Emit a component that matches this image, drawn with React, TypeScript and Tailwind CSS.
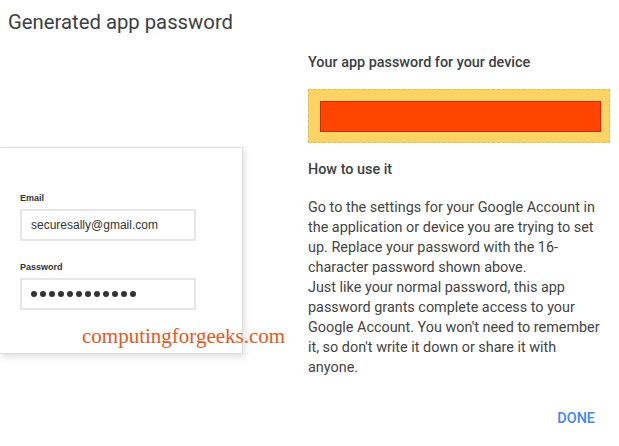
import React from "react";

export default function App() {
  return (
    <div
      className="w-[619px] h-[446px] bg-white overflow-hidden flex flex-col"
      style={{ fontFamily: "Roboto, 'Liberation Sans', sans-serif" }}
    >
      <div className="pl-[8px] pt-[8px] h-[35px] text-[20.3px] leading-[28px] text-[#3c4043]">
        Generated app password
      </div>
      <div className="flex flex-1">
        {/* Left column */}
        <div className="w-[308px] shrink-0 pt-[112px]">
          <div className="relative w-[243px] h-[207px] bg-white border border-l-0 border-[#dcdcdc] shadow-[2px_3px_6px_rgba(0,0,0,0.12)]">
            <div
              className="pl-[20px] pt-[44px]"
              style={{ fontFamily: "'Liberation Sans', Arial, sans-serif" }}
            >
              <div className="text-[9px] font-bold leading-[12px] text-[#333]">Email</div>
              <div className="mt-[5px] w-[176px] h-[32px] border-2 border-[#e6e6e6] flex items-center pl-[9px] text-[12px] text-[#333]">
                securesally@gmail.com
              </div>
              <div className="mt-[20px] text-[9px] font-bold leading-[12px] text-[#333]">Password</div>
              <div className="mt-[5px] w-[176px] h-[32px] border-2 border-[#e6e6e6] flex items-center pl-[9px] gap-[3px]">
                {Array.from({ length: 12 }).map((_, i) => (
                  <span key={i} className="w-[6px] h-[6px] rounded-full bg-[#333] inline-block" />
                ))}
              </div>
            </div>
            <div
              className="absolute left-[82px] top-[176px] text-[21px] leading-[24px] text-[#e8561c] whitespace-nowrap"
              style={{ fontFamily: "'Liberation Serif', 'Times New Roman', serif" }}
            >
              computingforgeeks.com
            </div>
          </div>
        </div>
        {/* Right column */}
        <div className="w-[302px] shrink-0 flex flex-col text-[14.4px] text-[#444]">
          <div className="pt-[18px] leading-[20px] font-medium text-[#3c4043]">
            Your app password for your device
          </div>
          <div className="mt-[16px] h-[54px] bg-[#fcd466] border border-dashed border-[#e8bc4c] pl-[11px] pr-[8px] pt-[11px]">
            <div className="h-[31px] bg-[#ff4500] border border-[#d22a00]" />
          </div>
          <div className="mt-[17px] leading-[20px] font-medium text-[#3c4043]">How to use it</div>
          <div className="mt-[18px] w-[296px] leading-[20px] text-[#444]">
            Go to the settings for your Google Account in the application or device you are trying to set up. Replace your password with the 16-character password shown above.
            <br />
            Just like your normal password, this app password grants complete access to your Google Account. You won't need to remember it, so don't write it down or share it with anyone.
          </div>
          <div className="mt-[31px] flex justify-end pr-[15px]">
            <span className="font-medium text-[#4285f4] leading-[20px]">DONE</span>
          </div>
        </div>
      </div>
    </div>
  );
}
